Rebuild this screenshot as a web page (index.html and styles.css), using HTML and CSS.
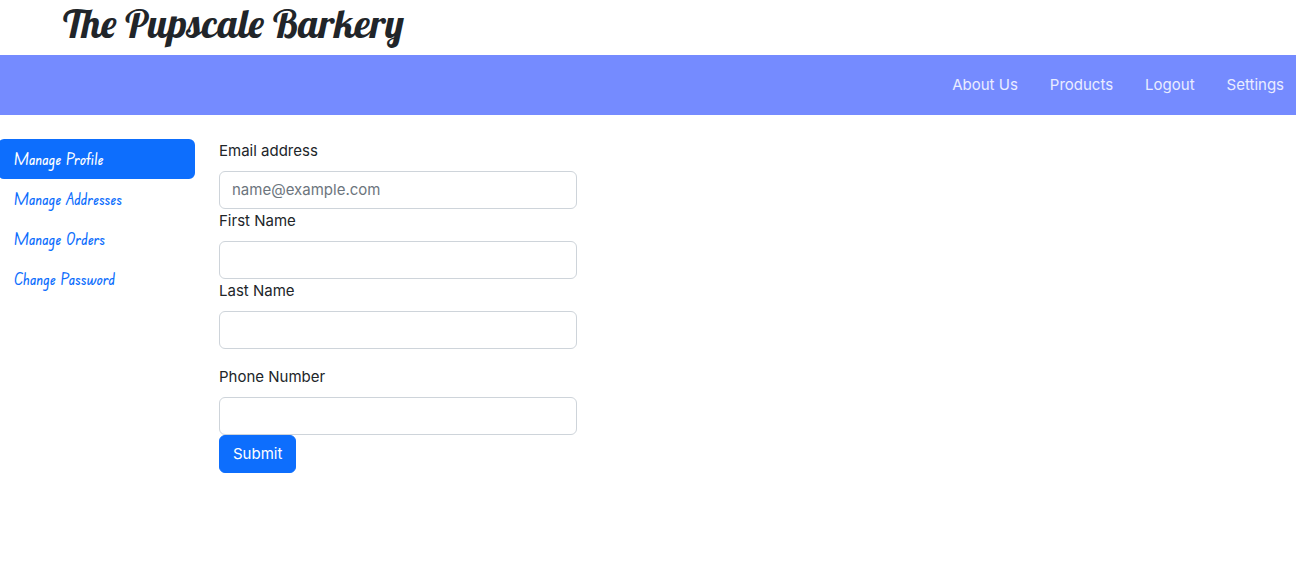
FILE: index.html
```
<!DOCTYPE html>
<html lang="en">
<head>
<meta charset="utf-8">
<title>The Pupscale Barkery</title>
<link rel="stylesheet" href="styles.css">
</head>
<body>
<header>
  <h1 class="brand">The Pupscale Barkery</h1>
  <nav class="topnav" aria-label="Main">
    <a href="#about">About Us</a>
    <a href="#products">Products</a>
    <a href="#logout">Logout</a>
    <a href="#settings">Settings</a>
  </nav>
</header>
<main class="layout">
  <nav class="sidenav" aria-label="Account">
    <a class="active" href="#profile" aria-current="page">Manage Profile</a>
    <a href="#addresses">Manage Addresses</a>
    <a href="#orders">Manage Orders</a>
    <a href="#password">Change Password</a>
  </nav>
  <form class="profile">
    <label for="email">Email address</label>
    <input id="email" type="email" placeholder="name@example.com">
    <label for="first">First Name</label>
    <input id="first" type="text">
    <label for="last">Last Name</label>
    <input id="last" type="text">
    <label class="spaced" for="phone">Phone Number</label>
    <input id="phone" type="tel">
    <button class="submit" type="submit">Submit</button>
  </form>
</main>
</body>
</html>
```
FILE: styles.css
```
* {
  box-sizing: border-box;
}

body {
  margin: 0;
  font: 15px/24px Inter, Roboto, sans-serif;
  color: #212529;
  background: #fff;
}

.brand {
  margin: 0;
  padding: 0 0 9px 63px;
  font: 400 40px/46px Lobster, "Liberation Serif", serif;
}

.topnav {
  display: flex;
  justify-content: flex-end;
  gap: 32px;
  padding: 18px 12px;
  background: #758bff;
}

.topnav a {
  color: #eaedff;
  text-decoration: none;
}

.layout {
  display: flex;
  gap: 24px;
  padding-top: 24px;
}

.sidenav {
  flex: 0 0 197px;
  margin-left: -2px;
  font: 500 16px/24px "Edu NSW ACT Foundation", "Open Sans", sans-serif;
}

.sidenav a {
  display: block;
  padding: 8px 16px;
  border-radius: 6px;
  color: #0d6efd;
  text-decoration: none;
}

.sidenav .active {
  color: #fff;
  background: #0d6efd;
}

.profile {
  flex: 0 1 358px;
  display: flex;
  flex-direction: column;
}

.profile label {
  margin-bottom: 8px;
}

.profile .spaced {
  margin-top: 16px;
}

.profile input {
  width: 100%;
  padding: 6px 12px;
  border: 1px solid #ced4da;
  border-radius: 6px;
  font: inherit;
  color: inherit;
  background: #fff;
}

.profile input::placeholder {
  color: #6c757d;
  opacity: 1;
}

.submit {
  align-self: flex-start;
  padding: 6px 13px;
  border: 1px solid #0d6efd;
  border-radius: 6px;
  font: inherit;
  color: #fff;
  background: #0d6efd;
}
```
